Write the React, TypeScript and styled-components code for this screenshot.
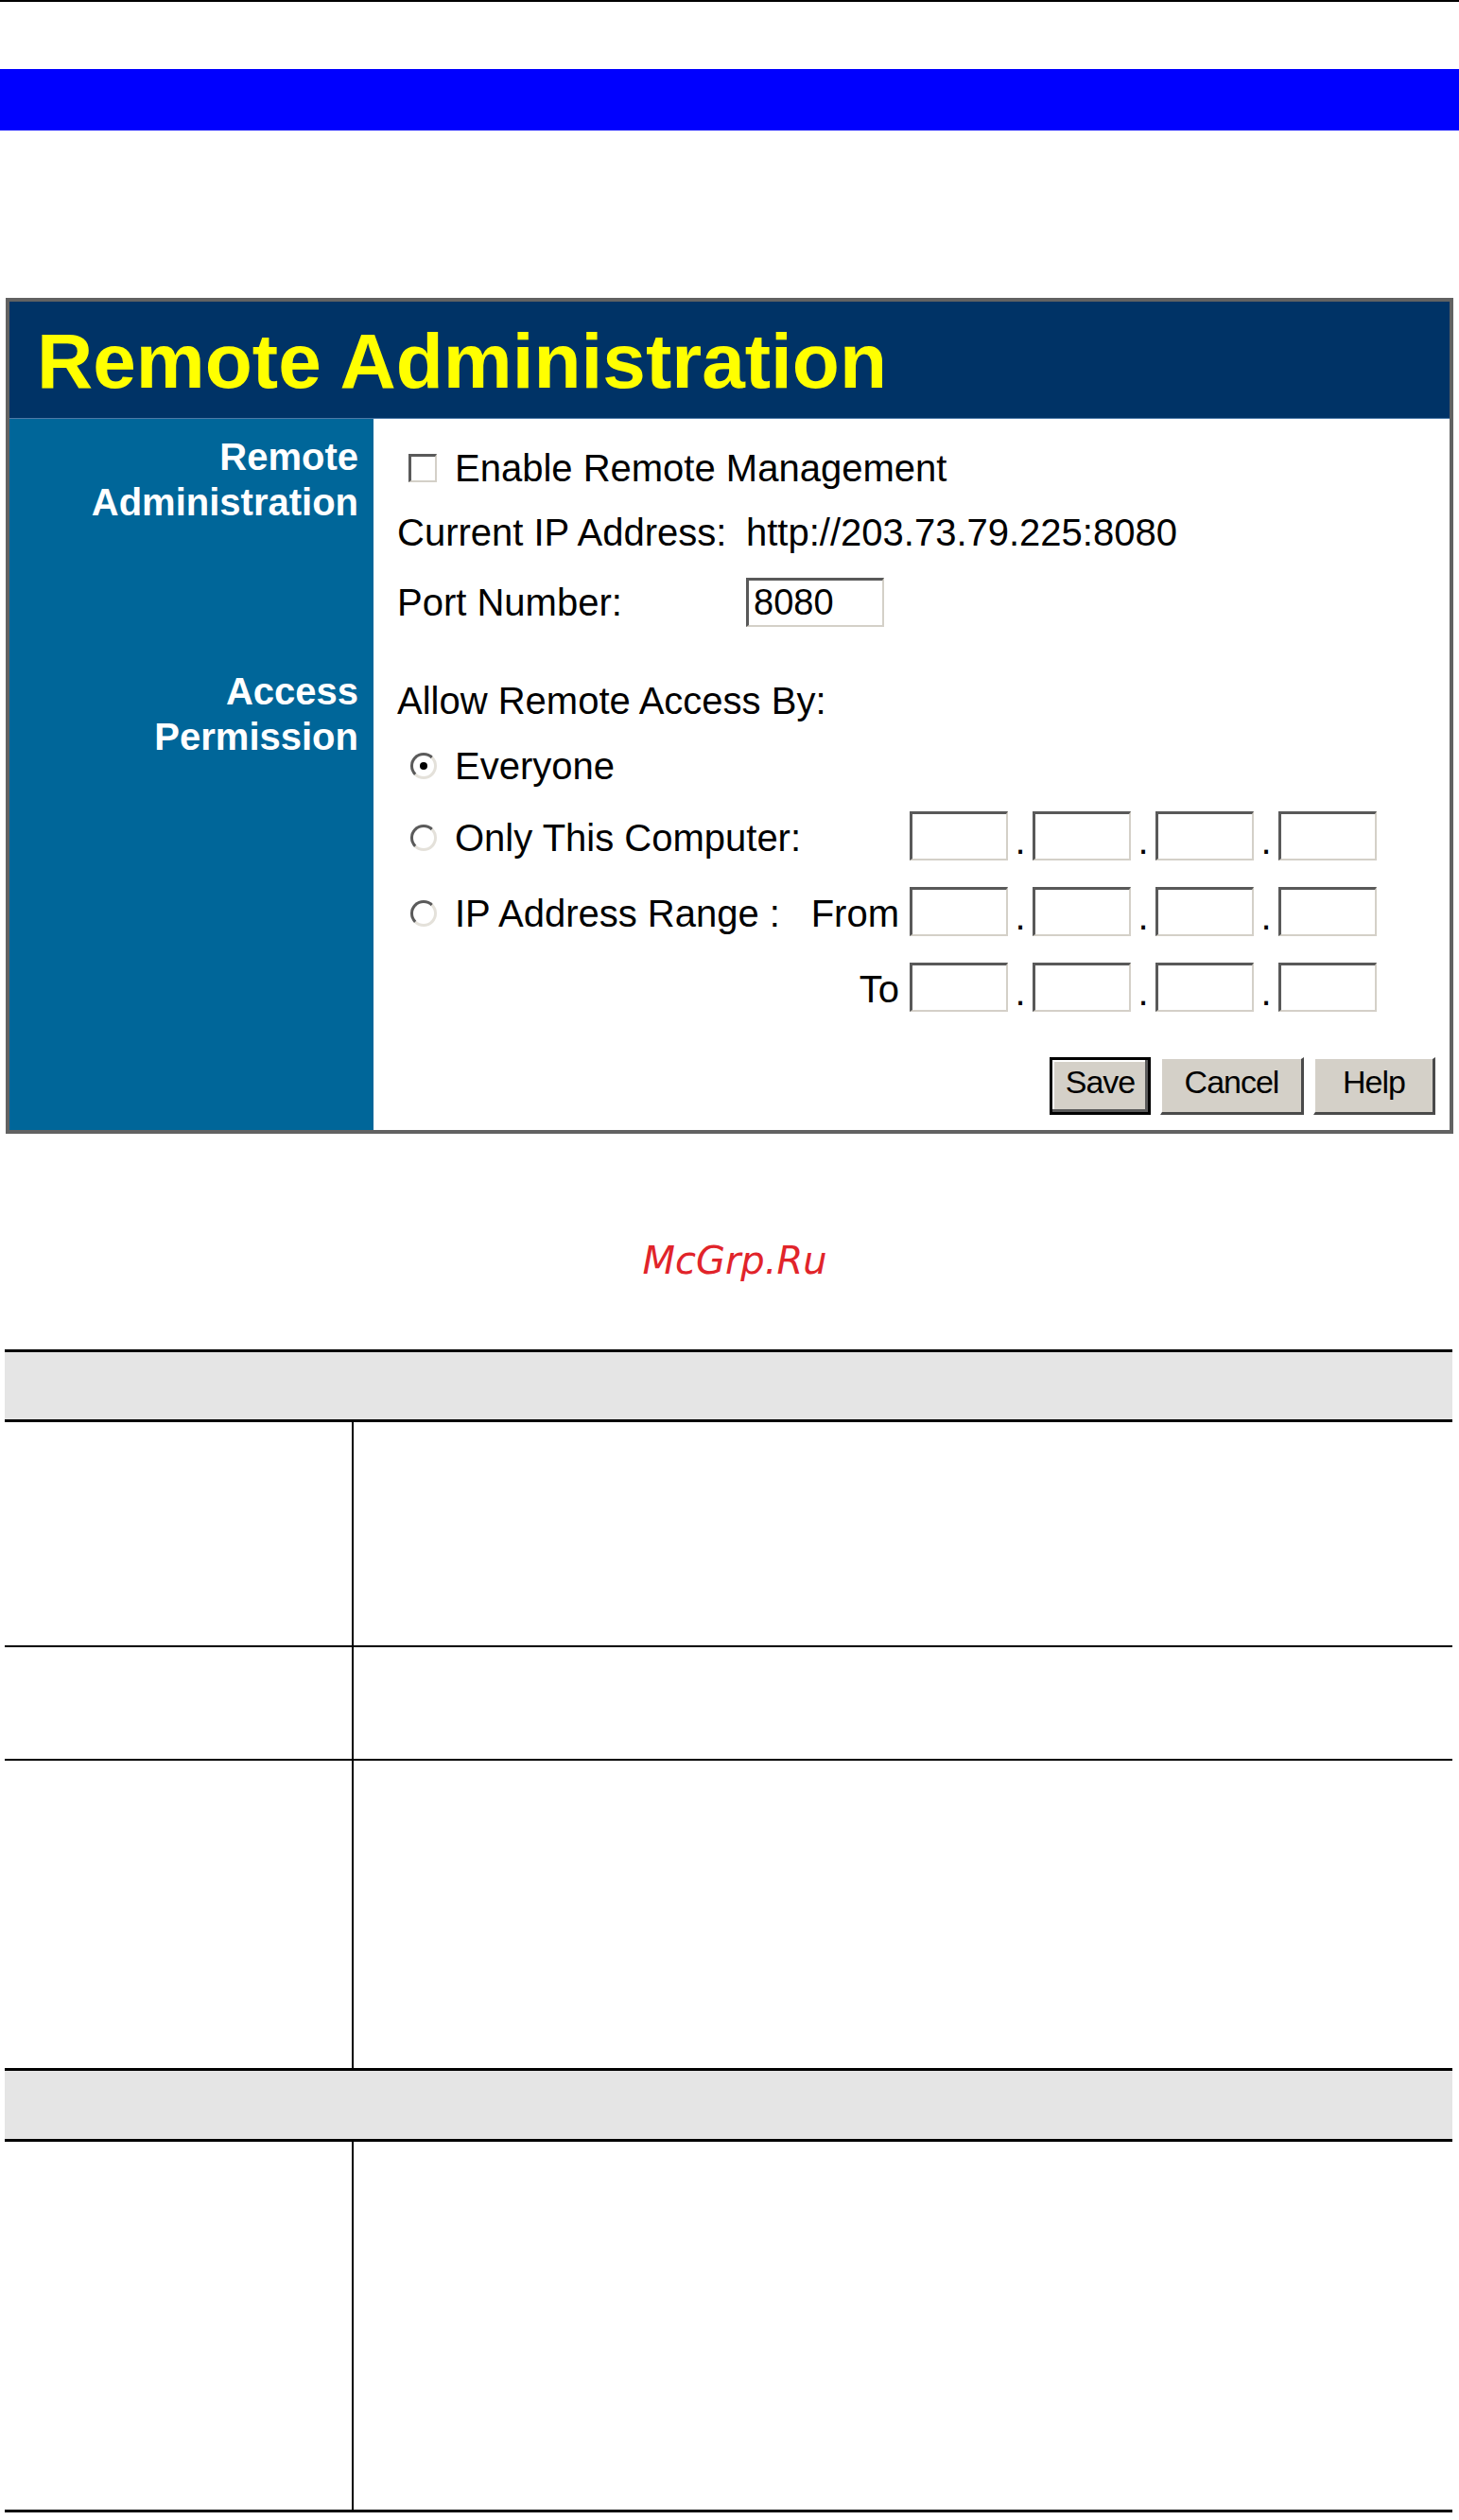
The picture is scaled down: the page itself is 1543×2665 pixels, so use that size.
import React from "react";
import styled, { createGlobalStyle } from "styled-components";

const GlobalStyle = createGlobalStyle`
  html, body { margin: 0; padding: 0; background: #ffffff; }
  body { font-family: "Liberation Sans", Arial, sans-serif; }
`;

const Page = styled.div`
  width: 1543px;
`;

const TopRule = styled.div`
  height: 2px;
  background: #000000;
`;

const BlueBar = styled.div`
  margin-top: 71px;
  height: 65px;
  background: #0000ff;
`;

const Panel = styled.section`
  margin: 177px 6px 0;
  border: 4px solid #626262;
  display: flex;
  flex-direction: column;
`;

const PanelTitle = styled.h1`
  margin: 0;
  height: 124px;
  box-sizing: border-box;
  padding: 2px 0 0 29px;
  background: #003366;
  border-bottom: 1px solid #4d7aa6;
  color: #ffff00;
  font: bold 82px/121px "Liberation Sans", Arial, sans-serif;
  white-space: nowrap;
`;

const PanelBody = styled.div`
  display: flex;
  height: 752px;
`;

const Sidebar = styled.div`
  width: 385px;
  flex: none;
  box-sizing: border-box;
  padding: 16px 16px 0 0;
  background: #006699;
  color: #ffffff;
  text-align: right;
`;

const SideLabel = styled.div<{ $gap?: number }>`
  margin-top: ${(p) => p.$gap ?? 0}px;
  font: bold 40px/48px "Liberation Sans", Arial, sans-serif;
`;

const Content = styled.div`
  flex: 1;
  display: flex;
  flex-direction: column;
  padding: 20px 15px 16px 25px;
  background: #ffffff;
  color: #000000;
  font: 40px "Liberation Sans", Arial, sans-serif;
`;

const FormRow = styled.div<{ $h: number; $mt?: number }>`
  height: ${(p) => p.$h}px;
  margin-top: ${(p) => p.$mt ?? 0}px;
  display: flex;
  align-items: center;
  white-space: nowrap;
`;

const FieldGrid = styled(FormRow)`
  display: grid;
  grid-template-columns: 369px auto;
  align-items: center;
`;

const IpGrid = styled(FormRow)`
  display: grid;
  grid-template-columns: 531px auto;
  column-gap: 11px;
  align-items: center;
`;

const Choice = styled.div`
  display: flex;
  align-items: center;
`;

const PushRight = styled.span`
  margin-left: auto;
`;

const ToLabel = styled.div`
  text-align: right;
`;

const Checkbox = styled.span`
  box-sizing: border-box;
  flex: none;
  width: 30px;
  height: 30px;
  margin: 0 19px 0 12px;
  border-style: solid;
  border-width: 3px 2px 2px 3px;
  border-color: #5a5a5a #d4d0c8 #d4d0c8 #5a5a5a;
  background: #ffffff;
`;

const Radio = styled.span<{ $checked?: boolean }>`
  box-sizing: border-box;
  flex: none;
  width: 28px;
  height: 28px;
  margin: 0 19px 0 14px;
  border-radius: 50%;
  border: 3px solid;
  border-color: #5a5a5a #e4e1da #e4e1da #5a5a5a;
  background: #ffffff;
  display: flex;
  align-items: center;
  justify-content: center;
  &::after {
    content: "";
    width: 8px;
    height: 8px;
    border-radius: 50%;
    background: ${(p) => (p.$checked ? "#000000" : "transparent")};
  }
`;

const TextField = styled.input<{ $w: number }>`
  box-sizing: border-box;
  width: ${(p) => p.$w}px;
  height: 52px;
  margin: 0;
  padding: 0 0 0 5px;
  border-style: solid;
  border-width: 3px 2px 2px 3px;
  border-color: #595959 #d4d0c8 #d4d0c8 #595959;
  background: #ffffff;
  color: #000000;
  font: 38px "Liberation Sans", Arial, sans-serif;
  outline: none;
`;

const IpGroup = styled.div`
  display: flex;
  align-items: flex-start;
`;

const IpDot = styled.span`
  width: 26px;
  padding-top: 5px;
  text-align: center;
  line-height: 52px;
`;

const ButtonRow = styled.div`
  margin-top: 33px;
  height: 61px;
  display: flex;
  justify-content: flex-end;
  gap: 10px;
`;

const Button = styled.button<{ $w: number; $primary?: boolean }>`
  box-sizing: border-box;
  width: ${(p) => p.$w}px;
  height: 61px;
  margin: 0;
  padding: 0 0 8px;
  background: #d4d0c8;
  color: #000000;
  font: 34px "Liberation Sans", Arial, sans-serif;
  letter-spacing: -1px;
  border-style: solid;
  border-width: ${(p) => (p.$primary ? "3px" : "2px 3px 3px 2px")};
  border-color: ${(p) =>
    p.$primary ? "#000000" : "#ffffff #4a4a4a #4a4a4a #ffffff"};
  box-shadow: ${(p) =>
    p.$primary ? "inset -3px -3px #5a5a5a, inset 2px 2px #ffffff" : "none"};
`;

const Watermark = styled.div`
  margin-top: 110px;
  height: 48px;
  padding-left: 11px;
  text-align: center;
  color: #e1242a;
  font: italic 40px/48px "DejaVu Sans", Verdana, sans-serif;
`;

const DocTable = styled.div`
  margin: 70px 0 0 5px;
  width: 1531px;
`;

const TableHead = styled.div<{ $h: number }>`
  height: ${(p) => p.$h}px;
  background: #e5e5e5;
  border-top: 3px solid #000000;
  border-bottom: 3px solid #000000;
`;

const TableRow = styled.div<{ $h: number; $rule?: number }>`
  display: grid;
  grid-template-columns: 369px 1fr;
  height: ${(p) => p.$h}px;
  border-bottom: ${(p) => p.$rule ?? 0}px solid #000000;
`;

const TermCell = styled.div`
  border-right: 2px solid #000000;
`;

const DescCell = styled.div``;

const IpFields: React.FC = () => (
  <IpGroup>
    <TextField $w={104} readOnly defaultValue="" />
    <IpDot>.</IpDot>
    <TextField $w={104} readOnly defaultValue="" />
    <IpDot>.</IpDot>
    <TextField $w={104} readOnly defaultValue="" />
    <IpDot>.</IpDot>
    <TextField $w={104} readOnly defaultValue="" />
  </IpGroup>
);

export default function App() {
  return (
    <Page>
      <GlobalStyle />
      <TopRule />
      <BlueBar />
      <Panel>
        <PanelTitle>Remote Administration</PanelTitle>
        <PanelBody>
          <Sidebar>
            <SideLabel>
              Remote
              <br />
              Administration
            </SideLabel>
            <SideLabel $gap={152}>
              Access
              <br />
              Permission
            </SideLabel>
          </Sidebar>
          <Content>
            <FormRow $h={64}>
              <Checkbox />
              Enable Remote Management
            </FormRow>
            <FieldGrid $h={72}>
              <span>Current IP Address:</span>
              <span>http://203.73.79.225:8080</span>
            </FieldGrid>
            <FieldGrid $h={76}>
              <span>Port Number:</span>
              <TextField $w={146} readOnly defaultValue="8080" />
            </FieldGrid>
            <FormRow $h={64} $mt={34}>
              Allow Remote Access By:
            </FormRow>
            <FormRow $h={74}>
              <Radio $checked />
              Everyone
            </FormRow>
            <IpGrid $h={78}>
              <Choice>
                <Radio />
                Only This Computer:
              </Choice>
              <IpFields />
            </IpGrid>
            <IpGrid $h={82}>
              <Choice>
                <Radio />
                IP Address Range :<PushRight>From</PushRight>
              </Choice>
              <IpFields />
            </IpGrid>
            <IpGrid $h={78}>
              <ToLabel>To</ToLabel>
              <IpFields />
            </IpGrid>
            <ButtonRow>
              <Button $w={107} $primary>
                Save
              </Button>
              <Button $w={152}>Cancel</Button>
              <Button $w={129}>Help</Button>
            </ButtonRow>
          </Content>
        </PanelBody>
      </Panel>
      <Watermark>McGrp.Ru</Watermark>
      <DocTable>
        <TableHead $h={71} />
        <TableRow $h={236} $rule={2}>
          <TermCell />
          <DescCell />
        </TableRow>
        <TableRow $h={118} $rule={2}>
          <TermCell />
          <DescCell />
        </TableRow>
        <TableRow $h={325}>
          <TermCell />
          <DescCell />
        </TableRow>
        <TableHead $h={72} />
        <TableRow $h={389} $rule={3}>
          <TermCell />
          <DescCell />
        </TableRow>
      </DocTable>
    </Page>
  );
}
